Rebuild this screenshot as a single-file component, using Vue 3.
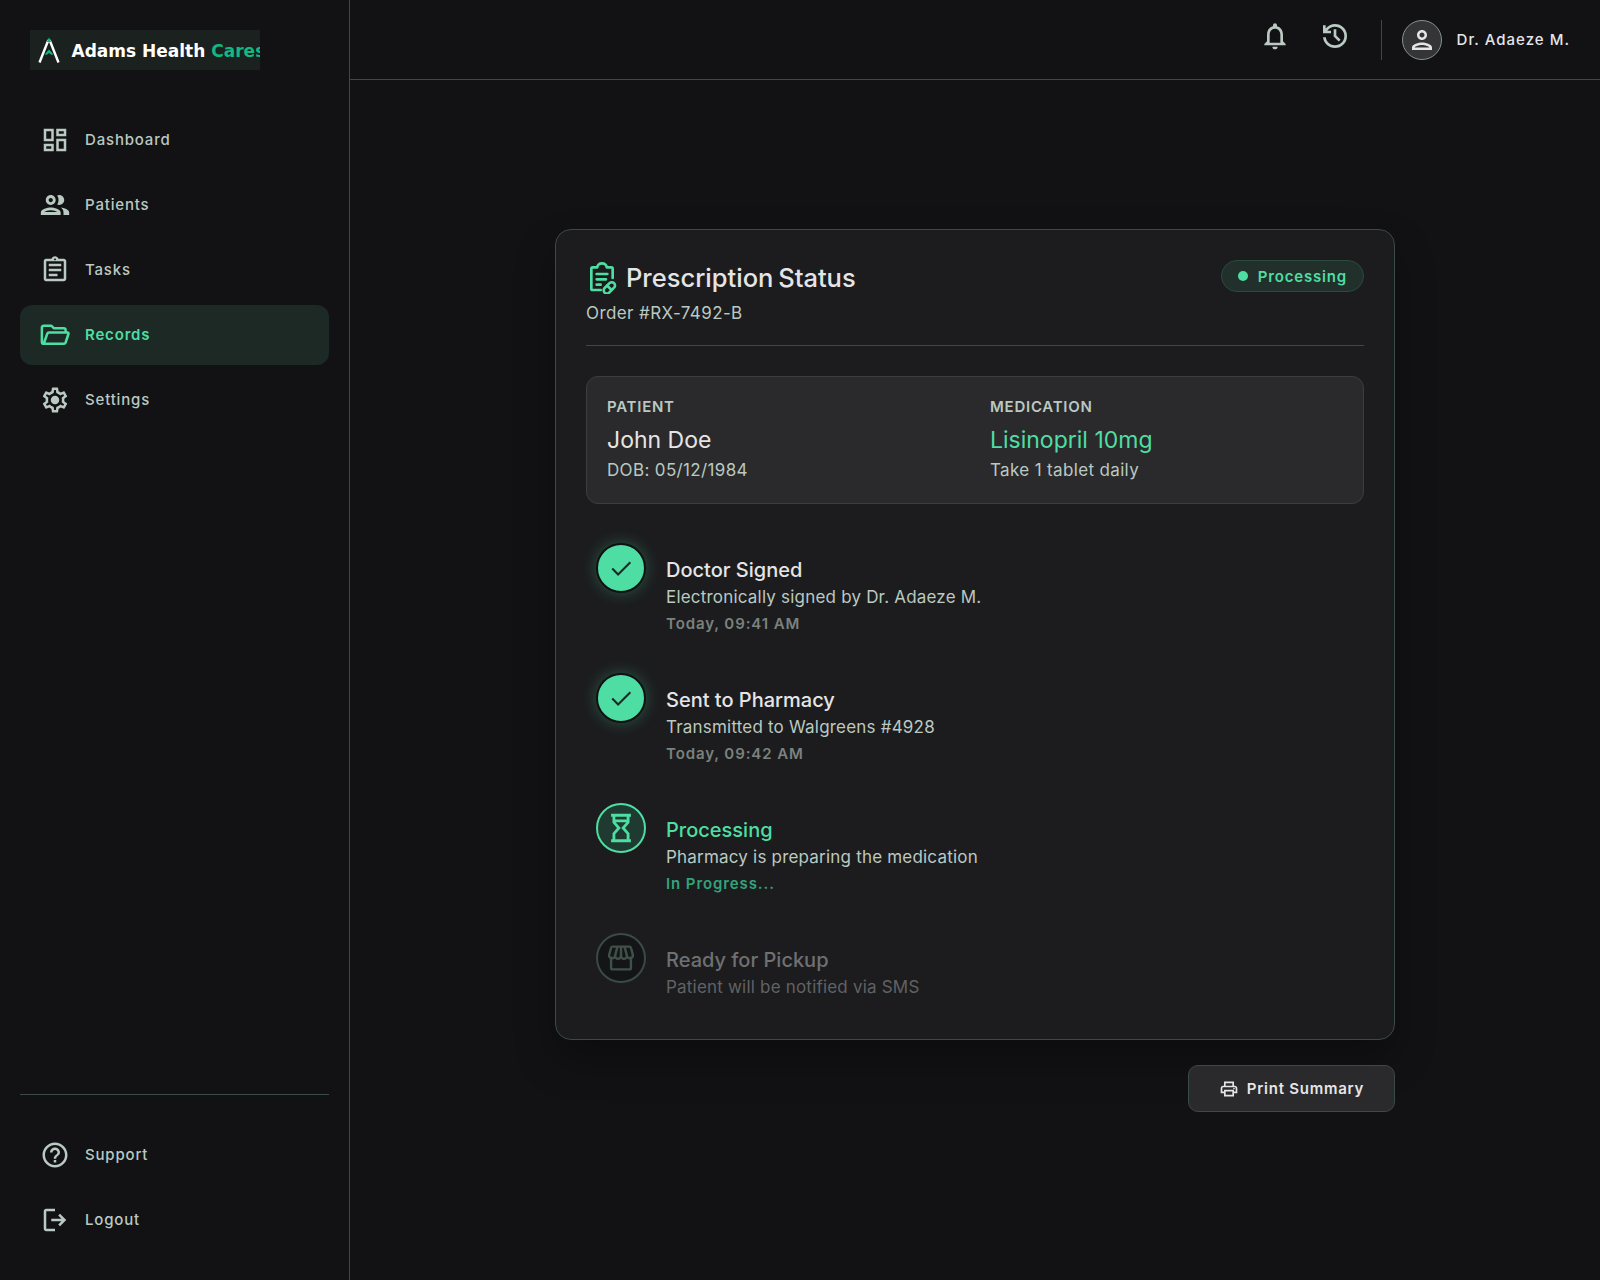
<script setup>
const navItems = [
  { label: 'Dashboard', icon: 'M19 5v2h-4V5h4M9 5v6H5V5h4m10 8v6h-4v-6h4M9 17v2H5v-2h4M21 3h-8v6h8V3zM11 3H3v10h8V3zm10 8h-8v10h8V11zm-10 4H3v6h8v-6z' },
  { label: 'Patients', big: true, icon: 'M9 13.75c-2.34 0-7 1.17-7 3.5V19h14v-1.75c0-2.33-4.66-3.5-7-3.5zM4.34 17c.84-.58 2.87-1.25 4.66-1.25s3.82.67 4.66 1.25H4.34zM9 12c1.93 0 3.5-1.57 3.5-3.5S10.93 5 9 5 5.5 6.57 5.5 8.5 7.07 12 9 12zm0-5c.83 0 1.5.67 1.5 1.5S9.83 10 9 10s-1.5-.67-1.5-1.5S8.17 7 9 7zm7.04 6.81c1.16.84 1.96 1.96 1.96 3.44V19h4v-1.75c0-2.02-3.5-3.17-5.96-3.44zM15 12c1.93 0 3.5-1.57 3.5-3.5S16.93 5 15 5c-.54 0-1.04.13-1.5.35.63.89 1 1.98 1 3.15s-.37 2.26-1 3.15c.46.22.96.35 1.5.35z' },
  { label: 'Tasks', icon: 'M7 15h7v2H7zm0-4h10v2H7zm0-4h10v2H7zm12-4h-4.18C14.4 1.84 13.3 1 12 1c-1.3 0-2.4.84-2.82 2H5c-.14 0-.27.01-.4.04-.39.08-.74.28-1.01.55-.18.18-.33.4-.43.64-.1.23-.16.49-.16.77v14c0 .27.06.54.16.78s.25.45.43.64c.27.27.62.47 1.01.55.13.02.26.03.4.03h14c1.1 0 2-.9 2-2V5c0-1.1-.9-2-2-2zm-7-.25c.41 0 .75.34.75.75s-.34.75-.75.75-.75-.34-.75-.75.34-.75.75-.75zM19 19H5V5h14v14z' },
  { label: 'Records', active: true, stroke: 'M3 19a1.5 1.5 0 0 1-1.5-1.5V6A1.5 1.5 0 0 1 3 4.5h6l2 2h8a1.5 1.5 0 0 1 1.5 1.5v2M3 19 5.8 11a1.5 1.5 0 0 1 1.4-1H22a.8.8 0 0 1 .8 1l-2.3 7a1.5 1.5 0 0 1-1.4 1H3z' },
  { label: 'Settings', dot: true, icon: 'M19.43 12.98c.04-.32.07-.64.07-.98 0-.34-.03-.66-.07-.98l2.11-1.65c.19-.15.24-.42.12-.64l-2-3.46c-.09-.16-.26-.25-.44-.25-.06 0-.12.01-.17.03l-2.49 1c-.52-.4-1.08-.73-1.69-.98l-.38-2.65C14.46 2.18 14.25 2 14 2h-4c-.25 0-.46.18-.49.42l-.38 2.65c-.61.25-1.17.59-1.69.98l-2.49-1c-.06-.02-.12-.03-.18-.03-.17 0-.34.09-.43.25l-2 3.46c-.13.22-.07.49.12.64l2.11 1.65c-.04.32-.07.65-.07.98 0 .33.03.66.07.98l-2.11 1.65c-.19.15-.24.42-.12.64l2 3.46c.09.16.26.25.44.25.06 0 .12-.01.17-.03l2.49-1c.52.4 1.08.73 1.69.98l.38 2.65c.03.24.24.42.49.42h4c.25 0 .46-.18.49-.42l.38-2.65c.61-.25 1.17-.59 1.69-.98l2.49 1c.06.02.12.03.18.03.17 0 .34-.09.43-.25l2-3.46c.12-.22.07-.49-.12-.64l-2.11-1.65zm-1.98-1.71c.04.31.05.52.05.73 0 .21-.02.43-.05.73l-.14 1.13.89.7 1.08.84-.7 1.21-1.27-.51-1.04-.42-.9.68c-.43.32-.84.56-1.25.73l-1.06.43-.16 1.13-.2 1.35h-1.4l-.19-1.35-.16-1.13-1.06-.43c-.43-.18-.83-.41-1.23-.71l-.91-.7-1.06.43-1.27.51-.7-1.21 1.08-.84.89-.7-.14-1.13c-.03-.31-.05-.54-.05-.74s.02-.43.05-.73l.14-1.13-.89-.7-1.08-.84.7-1.21 1.27.51 1.04.42.9-.68c.43-.32.84-.56 1.25-.73l1.06-.43.16-1.13.2-1.35h1.39l.19 1.35.16 1.13 1.06.43c.43.18.83.41 1.23.71l.91.7 1.06-.43 1.27-.51.7 1.21-1.07.85-.89.7.14 1.13z' }
]

const footerItems = [
  { label: 'Support', icon: 'M11 18h2v-2h-2v2zm1-16C6.48 2 2 6.48 2 12s4.48 10 10 10 10-4.48 10-10S17.52 2 12 2zm0 18c-4.41 0-8-3.59-8-8s3.59-8 8-8 8 3.59 8 8-3.59 8-8 8zm0-14c-2.21 0-4 1.79-4 4h2c0-1.1.9-2 2-2s2 .9 2 2c0 2-3 1.75-3 5h2c0-2.25 3-2.5 3-5 0-2.21-1.79-4-4-4z' },
  { label: 'Logout', icon: 'M5 21c-.55 0-1.02-.2-1.41-.59C3.2 20.02 3 19.55 3 19V5c0-.55.2-1.02.59-1.41C3.98 3.2 4.45 3 5 3h7v2H5v14h7v2H5zm11-4-1.38-1.45L17.17 13H9v-2h8.17l-2.55-2.55L16 7l5 5-5 5z' }
]

const steps = [
  { title: 'Doctor Signed', desc: 'Electronically signed by Dr. Adaeze M.', time: 'Today, 09:41 AM', state: 'done' },
  { title: 'Sent to Pharmacy', desc: 'Transmitted to Walgreens #4928', time: 'Today, 09:42 AM', state: 'done' },
  { title: 'Processing', desc: 'Pharmacy is preparing the medication', time: 'In Progress...', state: 'current' },
  { title: 'Ready for Pickup', desc: 'Patient will be notified via SMS', state: 'pending' }
]
</script>

<template>
  <div class="app">
    <aside class="sidebar">
      <div class="logo">
        <svg class="logo-mark" viewBox="0 0 22 27" width="22" height="27">
          <path d="M1.5 25.5 10 4h2l8.5 21.5" fill="none" stroke="#fff" stroke-width="2.4" />
          <path d="M8.6 5 11 .6 13.4 5z" fill="#10b981" />
          <path d="M6.6 17.5 11 12.5l4.4 5-2.2.2L11 16l-2.2 1.7z" fill="#10b981" />
        </svg>
        <span class="logo-text">Adams Health <em>Cares</em></span>
      </div>

      <nav class="nav">
        <a v-for="item in navItems" :key="item.label" class="nav-item" :class="{ active: item.active }">
          <svg class="nav-icon" :class="{ big: item.big }" viewBox="0 0 24 24">
            <path v-if="item.icon" :d="item.icon" fill="currentColor" />
            <path v-else :d="item.stroke" fill="none" stroke="currentColor" stroke-width="2" stroke-linejoin="round" />
            <circle v-if="item.dot" cx="12" cy="12" r="3.4" fill="currentColor" />
          </svg>
          <span class="nav-label">{{ item.label }}</span>
        </a>
      </nav>

      <div class="sidebar-footer">
        <a v-for="item in footerItems" :key="item.label" class="nav-item">
          <svg class="nav-icon" viewBox="0 0 24 24"><path :d="item.icon" fill="currentColor" /></svg>
          <span class="nav-label">{{ item.label }}</span>
        </a>
      </div>
    </aside>

    <div class="content">
      <header class="topbar">
        <svg class="top-icon" viewBox="0 0 24 24">
          <path fill="currentColor" d="M12 22c1.1 0 2-.9 2-2h-4c0 1.1.9 2 2 2zm6-6v-5c0-3.07-1.63-5.64-4.5-6.32V4c0-.83-.67-1.5-1.5-1.5s-1.5.67-1.5 1.5v.68C7.64 5.36 6 7.92 6 11v5l-2 2v1h16v-1l-2-2zm-2 1H8v-6c0-2.48 1.51-4.5 4-4.5s4 2.02 4 4.5v6z" />
        </svg>
        <svg class="top-icon" viewBox="0 0 24 24">
          <path fill="currentColor" d="M12 21c-2.3 0-4.3-.76-6.03-2.29C4.24 17.18 3.25 15.27 3.05 13h2.05c.23 1.73.98 3.17 2.27 4.3C8.66 18.43 10.2 19 12 19c1.95 0 3.6-.68 4.96-2.04C18.32 15.6 19 13.95 19 12s-.68-3.6-2.04-4.96C15.6 5.68 13.95 5 12 5c-1.15 0-2.23.27-3.22.8C7.78 6.33 6.93 7.07 6.25 8H9v2H3V4h2v2.35C5.85 5.28 6.88 4.46 8.1 3.88 9.32 3.29 10.62 3 12 3c2.5 0 4.62.87 6.36 2.62C20.13 7.38 21 9.5 21 12s-.87 4.63-2.62 6.37C16.62 20.13 14.5 21 12 21zm2.8-4.8L11 12.4V7h2v4.6l3.2 3.2-1.4 1.4z" />
        </svg>
        <div class="top-divider"></div>
        <div class="avatar">
          <svg viewBox="0 0 24 24" width="30" height="30">
            <path fill="currentColor" d="M12 6c1.1 0 2 .9 2 2s-.9 2-2 2-2-.9-2-2 .9-2 2-2m0 10c2.7 0 5.8 1.29 6 2H6c.23-.72 3.31-2 6-2m0-12C9.79 4 8 5.79 8 8s1.79 4 4 4 4-1.79 4-4-1.79-4-4-4zm0 10c-2.67 0-8 1.34-8 4v2h16v-2c0-2.66-5.33-4-8-4z" />
          </svg>
        </div>
        <span class="user-name">Dr. Adaeze M.</span>
      </header>

      <main class="main">
        <section class="card">
          <div class="card-head">
            <div>
              <h1 class="card-title">
                <svg class="title-icon" viewBox="0 0 24 24" fill="none" stroke="currentColor" stroke-width="2" stroke-linecap="round" stroke-linejoin="round">
                  <path d="M11 21H5a1 1 0 0 1-1-1V5a1 1 0 0 1 1-1h3.5a3.5 3 0 0 1 7 0H19a1 1 0 0 1 1 1v7" />
                  <path d="M8 9h8M8 13h7M8 17h3" />
                  <rect x="12.5" y="17" width="10" height="4.8" rx="2.4" transform="rotate(-45 17.5 19.4)" />
                  <path d="M16 17.8l3 3" />
                </svg>
                Prescription Status
              </h1>
              <div class="order">Order #RX-7492-B</div>
            </div>
            <div class="badge"><span class="badge-dot"></span>Processing</div>
          </div>

          <div class="info">
            <div>
              <div class="info-label">PATIENT</div>
              <div class="info-value">John Doe</div>
              <div class="info-sub">DOB: 05/12/1984</div>
            </div>
            <div>
              <div class="info-label">MEDICATION</div>
              <div class="info-value accent">Lisinopril 10mg</div>
              <div class="info-sub">Take 1 tablet daily</div>
            </div>
          </div>

          <div class="timeline">
            <div v-for="step in steps" :key="step.title" class="step" :class="step.state">
              <div class="step-circle">
                <svg v-if="step.state === 'done'" viewBox="0 0 24 24" width="28" height="28" fill="none" stroke="currentColor" stroke-width="1.8">
                  <path d="M4.5 12.5l5 5L20 7" />
                </svg>
                <svg v-else-if="step.state === 'current'" viewBox="0 0 24 24" width="34" height="34" fill="none" stroke="currentColor" stroke-width="2">
                  <path d="M5 3h14M5 21h14M7 3v5l3.5 4L7 16v5M17 3v5l-3.5 4 3.5 4v5M8 7h8" />
                </svg>
                <svg v-else viewBox="0 0 24 24" width="34" height="34" fill="none" stroke="currentColor" stroke-width="1.7" stroke-linejoin="round">
                  <path d="M5 11v8a1 1 0 0 0 1 1h12a1 1 0 0 0 1-1v-8" />
                  <path d="M6 4h12a1 1 0 0 1 1 .8l1.4 5a2.1 2.1 0 0 1-4.2.7 2.1 2.1 0 0 1-4.2 0 2.1 2.1 0 0 1-4.2 0 2.1 2.1 0 0 1-4.2-.7l1.4-5A1 1 0 0 1 6 4z" />
                  <path d="M9.5 4 7.8 10.5M14.5 4l1.7 6.5M12 4v6.5" />
                </svg>
              </div>
              <div class="step-text">
                <div class="step-title">{{ step.title }}</div>
                <div class="step-desc">{{ step.desc }}</div>
                <div v-if="step.time" class="step-time">{{ step.time }}</div>
              </div>
            </div>
          </div>
        </section>

        <div class="actions">
          <button class="print-btn">
            <svg viewBox="0 0 24 24" width="20" height="20">
              <path fill="currentColor" d="M19 8h-1V3H6v5H5c-1.66 0-3 1.34-3 3v6h4v4h12v-4h4v-6c0-1.66-1.34-3-3-3zM8 5h8v3H8V5zm8 12v2H8v-4h8v2zm2-2v-2H6v2H4v-4c0-.55.45-1 1-1h14c.55 0 1 .45 1 1v4h-2z" />
              <circle cx="18" cy="11.5" r="1" fill="currentColor" />
            </svg>
            Print Summary
          </button>
        </div>
      </main>
    </div>
  </div>
</template>

<style scoped>
.app {
  display: flex;
  min-height: 1280px;
  background: #121214;
  color: #e5e5e7;
  font-family: Inter, "Liberation Sans", sans-serif;
}

.sidebar {
  width: 350px;
  box-sizing: border-box;
  flex-shrink: 0;
  display: flex;
  flex-direction: column;
  padding: 30px 20px;
  border-right: 1px solid #3a4a44;
}

.logo {
  width: 230px;
  height: 40px;
  margin-left: 10px;
  display: flex;
  align-items: center;
  gap: 12px;
  padding-left: 8px;
  box-sizing: border-box;
  background: #1b211f;
  overflow: hidden;
}

.logo-mark {
  flex-shrink: 0;
}

.logo-text {
  padding-top: 2px;
  margin-left: -0.5px;
  font-family: "DejaVu Sans", sans-serif;
  font-weight: 700;
  font-size: 17px;
  color: #fff;
  white-space: nowrap;
}

.logo-text em {
  font-style: normal;
  color: #10b981;
}

.nav {
  margin-top: 40px;
  display: flex;
  flex-direction: column;
  gap: 5px;
  flex: 1;
}

.nav-item {
  height: 60px;
  display: flex;
  align-items: center;
  gap: 15px;
  padding-left: 20px;
  border-radius: 12px;
  font-size: 15px;
  font-weight: 500;
  letter-spacing: 0.055em;
  color: #bac9c1;
}

.nav-item.active {
  background: #1c2925;
  color: #4edea3;
  font-weight: 600;
}

.nav-label {
  padding-bottom: 2px;
}

.nav-icon {
  width: 30px;
  height: 30px;
  flex-shrink: 0;
}

.nav-icon.big {
  width: 34px;
  height: 34px;
  margin: 0 -2px;
}

.sidebar-footer {
  display: flex;
  flex-direction: column;
  gap: 5px;
  padding-top: 30px;
  border-top: 1px solid #3a4a44;
}

.content {
  flex: 1;
  min-width: 0;
}

.topbar {
  height: 80px;
  box-sizing: border-box;
  display: flex;
  align-items: center;
  justify-content: flex-end;
  padding-right: 30px;
  border-bottom: 1px solid #3a4a44;
  color: #bac9c1;
}

.top-icon {
  width: 32px;
  height: 32px;
  margin-right: 28px;
  margin-top: -8px;
}

.top-icon + .top-divider {
  margin-left: 2px;
}

.top-divider {
  width: 1px;
  height: 40px;
  background: #3a4a44;
  margin-right: 20px;
}

.avatar {
  width: 40px;
  height: 40px;
  box-sizing: border-box;
  border-radius: 50%;
  background: #353537;
  border: 1px solid #83948c;
  display: flex;
  align-items: center;
  justify-content: center;
  color: #e5e5e7;
  margin-right: 15px;
}

.user-name {
  font-size: 15px;
  font-weight: 500;
  letter-spacing: 0.068em;
  color: #e5e5e7;
}

.main {
  padding-top: 149px;
  display: flex;
  flex-direction: column;
  align-items: center;
}

.card {
  width: 840px;
  height: 811px;
  box-sizing: border-box;
  padding: 30px;
  background: #1c1c1e;
  border: 1px solid #3a4a44;
  border-radius: 16px;
  box-shadow: 0 20px 40px rgba(0, 0, 0, 0.3);
}

.card-head {
  display: flex;
  justify-content: space-between;
  align-items: flex-start;
  padding-bottom: 20px;
  border-bottom: 1px solid #3a4a44;
  height: 86px;
  box-sizing: border-box;
}

.card-title {
  margin: 0;
  display: flex;
  align-items: center;
  gap: 8px;
  font-size: 25.5px;
  font-weight: 500;
  line-height: 36px;
  word-spacing: -2px;
  color: #e5e5e7;
}

.title-icon {
  width: 32px;
  height: 32px;
  color: #4edea3;
}

.order {
  margin-top: 4px;
  font-size: 17px;
  line-height: 26px;
  letter-spacing: 0.4px;
  color: #bac9c1;
}

.badge {
  height: 32px;
  box-sizing: border-box;
  display: flex;
  align-items: center;
  gap: 10px;
  padding: 0 16px;
  border-radius: 16px;
  background: #21302b;
  border: 1px solid #2a4a3e;
  font-size: 15px;
  font-weight: 600;
  letter-spacing: 0.055em;
  color: #4edea3;
}

.badge-dot {
  width: 10px;
  height: 10px;
  border-radius: 50%;
  background: #4edea3;
}

.info {
  margin-top: 30px;
  height: 128px;
  box-sizing: border-box;
  display: grid;
  grid-template-columns: 1fr 1fr;
  gap: 30px;
  padding: 20px;
  background: #2a2a2c;
  border: 1px solid #3a3f3e;
  border-radius: 12px;
}

.info-label {
  font-size: 15px;
  font-weight: 600;
  line-height: 20px;
  letter-spacing: 0.05em;
  color: #bac9c1;
}

.info-value {
  margin-top: 7px;
  font-size: 23px;
  font-weight: 400;
  line-height: 32px;
  color: #e5e5e7;
}

.info-value.accent {
  color: #4edea3;
}

.info-sub {
  margin-top: 1px;
  font-size: 17px;
  line-height: 26px;
  letter-spacing: 0.35px;
  color: #bac9c1;
}

.timeline {
  margin-top: 39px;
  padding-left: 10px;
  display: flex;
  flex-direction: column;
  gap: 30px;
}

.step {
  display: flex;
  gap: 20px;
  height: 100px;
}

.step:last-child {
  height: 70px;
}

.step-circle {
  width: 50px;
  height: 50px;
  box-sizing: border-box;
  flex-shrink: 0;
  border-radius: 50%;
  display: flex;
  align-items: center;
  justify-content: center;
}

.done .step-circle {
  background: #4edea3;
  border: 2px solid #0f1112;
  color: #1c2925;
  box-shadow: 0 0 15px rgba(78, 222, 163, 0.3);
}

.current .step-circle {
  background: #1f3a30;
  border: 2px solid #4edea3;
  color: #4edea3;
}

.pending .step-circle {
  background: #141516;
  border: 2px solid #3a4a44;
  color: #3f5049;
}

.step-text {
  padding-top: 13px;
}

.step-title {
  font-size: 20px;
  font-weight: 500;
  line-height: 28px;
  color: #e5e5e7;
}

.step-desc {
  font-size: 17px;
  line-height: 26px;
  letter-spacing: 0.2px;
  color: #bac9c1;
}

.step-time {
  margin-top: 2px;
  font-size: 15px;
  font-weight: 600;
  line-height: 24px;
  letter-spacing: 0.06em;
  color: #7a827e;
}

.current .step-title {
  color: #4edea3;
}

.current .step-time {
  color: #32a37a;
}

.pending .step-title {
  color: #6f7072;
}

.pending .step-desc {
  color: #616264;
}

.actions {
  width: 840px;
  margin-top: 25px;
  display: flex;
  justify-content: flex-end;
}

.print-btn {
  width: 207px;
  height: 47px;
  display: flex;
  align-items: center;
  justify-content: center;
  gap: 8px;
  background: #2a2a2c;
  border: 1px solid #3a4a44;
  border-radius: 10px;
  font-family: inherit;
  font-size: 15px;
  font-weight: 600;
  letter-spacing: 0.05em;
  color: #e5e5e7;
}
</style>

<style>
body {
  background: #121214;
}
</style>
